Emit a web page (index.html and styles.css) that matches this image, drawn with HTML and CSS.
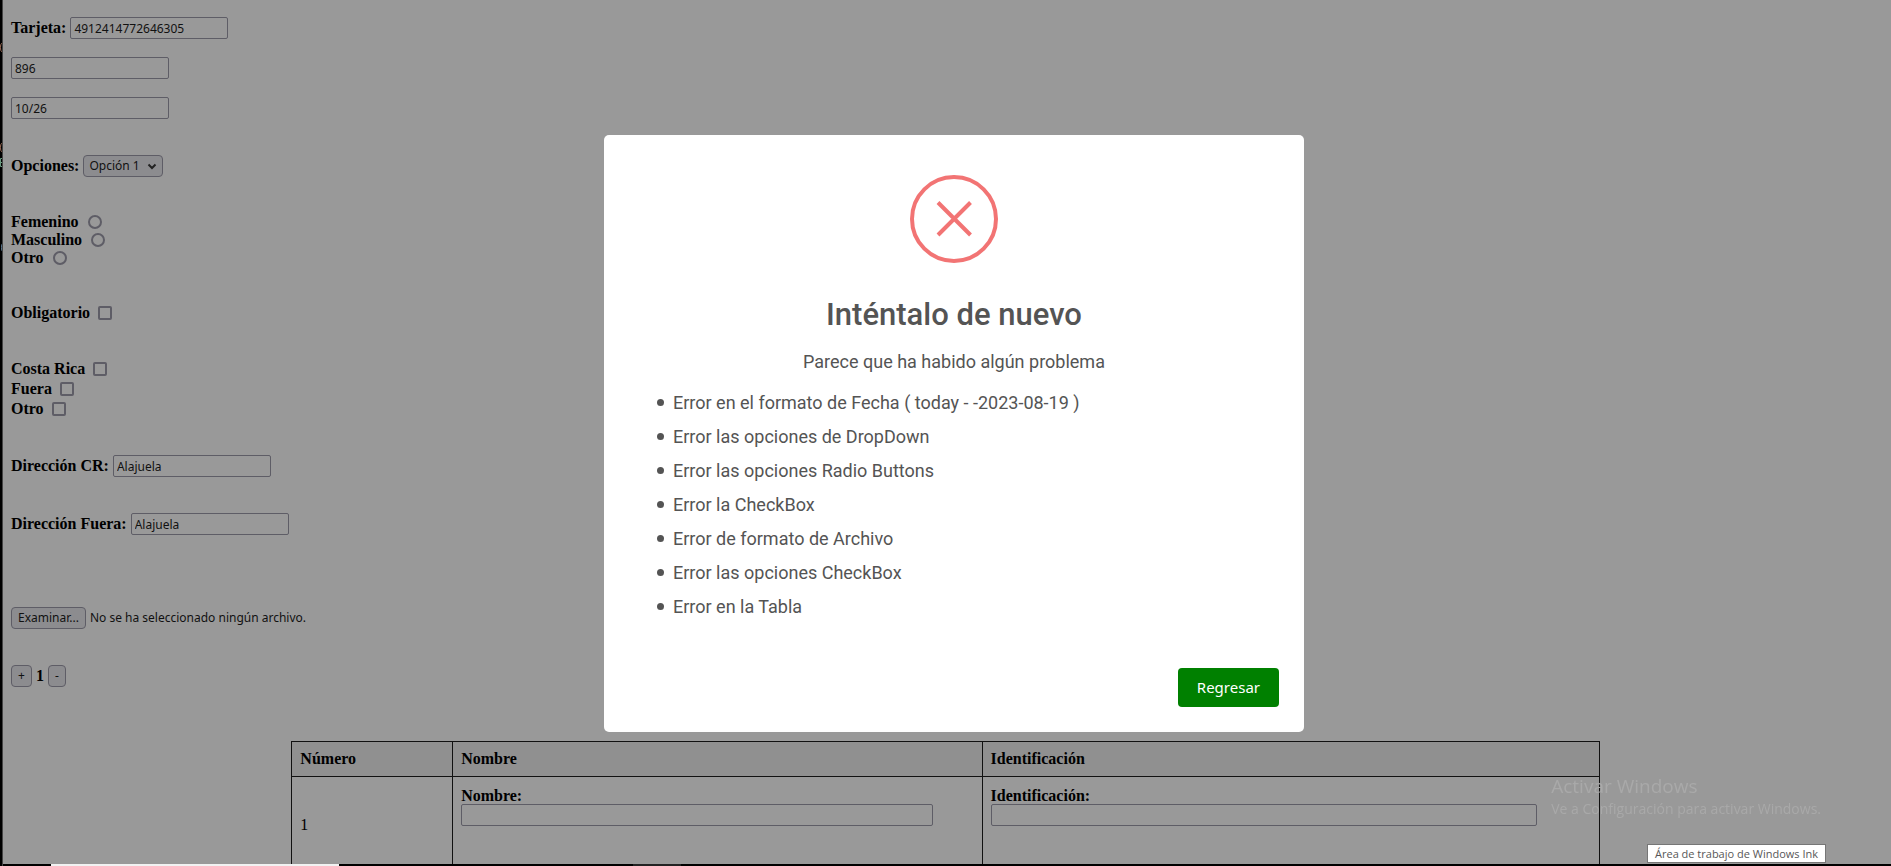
FILE: index.html
```html
<!DOCTYPE html>
<html lang="es">
<head>
<meta charset="utf-8">
<title>Formulario</title>
<link rel="stylesheet" href="styles.css">
</head>
<body>
<div class="desktop">
  <div class="edge">
    <svg class="slivers" width="3" height="260" viewBox="0 0 3 260" aria-hidden="true">
      <path stroke="#a0705a" d="M3 43.500H1.500Q.5 44 .5 47.500T1.500 51.500H3M3 143.500H1.500Q.5 144 .5 147.500T1.500 151.500H3"/>
      <path stroke="#6a9a80" d="M3 158.500H.5V166.500H3M.5 162.500H3"/>
      <path stroke="#5f7f99" d="M3 243.500H2.500Q1.500 244 1.500 247.500T2.500 251.500H3"/>
    </svg>
  </div>
  <main class="page">
    <form class="form">
      <div class="row"><label for="card">Tarjeta:</label><input class="text" id="card" type="text" value="4912414772646305"></div>
      <div class="row"><input class="text" type="text" aria-label="CVV" value="896"></div>
      <div class="row"><input class="text" type="text" aria-label="Vencimiento" value="10/26"></div>
      <div class="row row-spaced"><label for="options">Opciones:</label><span class="select-box"><select class="select" id="options"><option>Opción 1</option></select><svg class="chevron" viewBox="0 0 10 7" aria-hidden="true"><path d="M1.500 1.500 5 5l3.500-3.500"/></svg></span></div>
      <div class="group">
        <div class="option"><label for="f">Femenino</label><input class="radio" id="f" type="radio" name="g"></div>
        <div class="option"><label for="m">Masculino</label><input class="radio" id="m" type="radio" name="g"></div>
        <div class="option"><label for="o">Otro</label><input class="radio" id="o" type="radio" name="g"></div>
      </div>
      <div class="group checks">
        <div class="option"><label for="req">Obligatorio</label><input class="check" id="req" type="checkbox"></div>
      </div>
      <div class="group checks">
        <div class="option"><label for="cr">Costa Rica</label><input class="check" id="cr" type="checkbox"></div>
        <div class="option"><label for="fu">Fuera</label><input class="check" id="fu" type="checkbox"></div>
        <div class="option"><label for="ot">Otro</label><input class="check" id="ot" type="checkbox"></div>
      </div>
      <div class="row row-spaced"><label for="dcr">Dirección CR:</label><input class="text" id="dcr" type="text" value="Alajuela"></div>
      <div class="row row-spaced"><label for="dfu">Dirección Fuera:</label><input class="text" id="dfu" type="text" value="Alajuela"></div>
      <div class="row row-file"><button class="btn" type="button">Examinar...</button><span class="file-name">No se ha seleccionado ningún archivo.</span></div>
      <div class="row row-spaced"><button class="btn" type="button">+</button><b>1</b><button class="btn" type="button">-</button></div>
      <table class="table">
        <thead><tr><th class="col-num">Número</th><th class="col-name">Nombre</th><th>Identificación</th></tr></thead>
        <tbody><tr>
          <td>1</td>
          <td class="top"><label for="name">Nombre:</label><input class="text text-name" id="name" type="text"></td>
          <td class="top"><label for="ident">Identificación:</label><input class="text text-ident" id="ident" type="text"></td>
        </tr></tbody>
      </table>
    </form>
  </main>
</div>
<div class="overlay">
  <section class="modal" role="dialog" aria-labelledby="title">
    <svg class="icon" viewBox="0 0 88 88" aria-hidden="true"><circle cx="44" cy="44" r="42"/><path d="M28 27.500 60.500 60M60.500 27.500 28 60"/></svg>
    <h2 class="title" id="title">Inténtalo de nuevo</h2>
    <p class="message">Parece que ha habido algún problema</p>
    <ul class="errors">
      <li>Error en el formato de Fecha ( today - -2023-08-19 )</li>
      <li>Error las opciones de DropDown</li>
      <li>Error las opciones Radio Buttons</li>
      <li>Error la CheckBox</li>
      <li>Error de formato de Archivo</li>
      <li>Error las opciones CheckBox</li>
      <li>Error en la Tabla</li>
    </ul>
    <footer class="actions"><button class="back" type="button">Regresar</button></footer>
  </section>
</div>
<div class="watermark"><p class="mark-title">Activar Windows</p><p class="mark-text">Ve a Configuración para activar Windows.</p></div>
<div class="tooltip" role="tooltip">Área de trabajo de Windows Ink</div>
<div class="taskbar"><span class="task-search"></span><span class="task-app"></span></div>
</body>
</html>
```
FILE: styles.css
```css
* { box-sizing: border-box; }
body {
  margin: 0;
  height: 100vh;
  overflow: hidden;
  background: #999;
  color: #000;
  font: 16px/18px "Liberation Serif", "Times New Roman", serif;
}
.desktop { display: flex; height: 100vh; overflow: hidden; }
.edge {
  flex: none;
  width: 3px;
  background: #000;
  border-right: 1px solid #444;
  overflow: hidden;
}
.slivers { display: block; fill: none; }
.page { flex: 1; padding: 17px 11px 0 8px; }
label { font-weight: bold; }
.row { display: flex; align-items: center; gap: 4px; height: 22px; margin-bottom: 18px; }
.row-spaced { margin-top: 36px; }
.row-file { margin-top: 72px; }
.text, .select, .btn, .file-name { font: 12px/18px "Noto Sans", sans-serif; color: #111; }
.text {
  width: 158px;
  height: 22px;
  padding: 0 3px;
  border: 1px solid #5e5d66;
  border-radius: 2px;
  background: transparent;
}
.select-box { position: relative; display: flex; }
.select {
  appearance: none;
  width: 80px;
  height: 22px;
  padding: 0 5px;
  border: 1px solid #5e5d66;
  border-radius: 4px;
  background: #8c8c8f;
}
.chevron {
  position: absolute;
  right: 6px;
  top: 8px;
  width: 10px;
  height: 7px;
  fill: none;
  stroke: #222;
  stroke-width: 2;
  pointer-events: none;
}
.btn {
  height: 22px;
  padding: 0 6px;
  border: 1px solid #5e5d66;
  border-radius: 4px;
  background: #8c8c8f;
}
.group { margin-top: 36px; }
.option { display: flex; align-items: center; gap: 9px; height: 18px; }
.checks .option { gap: 8px; height: 20px; }
.radio, .check {
  appearance: none;
  width: 14px;
  height: 14px;
  margin: 0;
  border: 2px solid #5e5d66;
  border-radius: 2px;
}
.radio { border-radius: 50%; }
.table { width: 70%; margin: 54px auto 0; border-collapse: collapse; table-layout: fixed; }
.table th, .table td { padding: 8px; border: 1px solid #111; text-align: left; }
.table th { background: #909090; }
.table td { height: 96px; }
.table .top { vertical-align: top; padding-top: 10px; }
.table .col-num { width: 12.3%; }
.table .col-name { width: 40.5%; }
.table label, .table .text { display: block; }
.table label { line-height: 17px; }
.table .text-name { width: 92%; }
.table .text-ident { width: 91%; }
.overlay {
  position: fixed;
  inset: 0;
  padding-left: 17px;
  display: flex;
  justify-content: center;
  align-items: center;
}
.modal {
  width: 100%;
  max-width: 700px;
  padding: 40px 25px 25px;
  border-radius: 5px;
  background: #fff;
  color: #545454;
  font: 18px/34px Roboto, sans-serif;
}
.icon { display: block; width: 88px; height: 88px; margin: 0 auto; fill: none; stroke: #f27474; stroke-width: 4; }
.title { margin: 34px 0 0; font-size: 31px; line-height: 36px; font-weight: 500; text-align: center; }
.message { margin: 12px 0 7px; text-align: center; }
.errors { margin: 0; padding: 0 0 0 28px; list-style: none; }
.errors li { display: flex; align-items: center; gap: 9px; }
.errors li::before {
  content: "";
  width: 7px;
  height: 7px;
  border-radius: 50%;
  background: #545454;
}
.actions { display: flex; justify-content: flex-end; margin-top: 44px; }
.back {
  padding: 0 19px;
  height: 39px;
  border: 0;
  border-radius: 4px;
  background: #008000;
  color: #fff;
  font: 15px/24px "Noto Sans", sans-serif;
}
.watermark, .tooltip { position: fixed; font-family: "Open Sans", sans-serif; }
.watermark { right: 70px; bottom: 47px; color: #a9a9a9; }
.mark-title { margin: 0; font-size: 19px; line-height: 26px; }
.mark-text { margin: 0; font-size: 14px; line-height: 20px; }
.tooltip {
  right: 65px;
  bottom: 3px;
  padding: 0 7px;
  border: 1px solid #767676;
  background: #fff;
  color: #575757;
  font-size: 11px;
  line-height: 17px;
}
.taskbar { position: fixed; left: 3px; right: 0; bottom: 0; height: 2px; display: flex; gap: 294px; padding-left: 48px; background: #000; }
.task-search { width: 288px; background: #f2f2f2; }
.task-app { width: 48px; background: #222; }
```
